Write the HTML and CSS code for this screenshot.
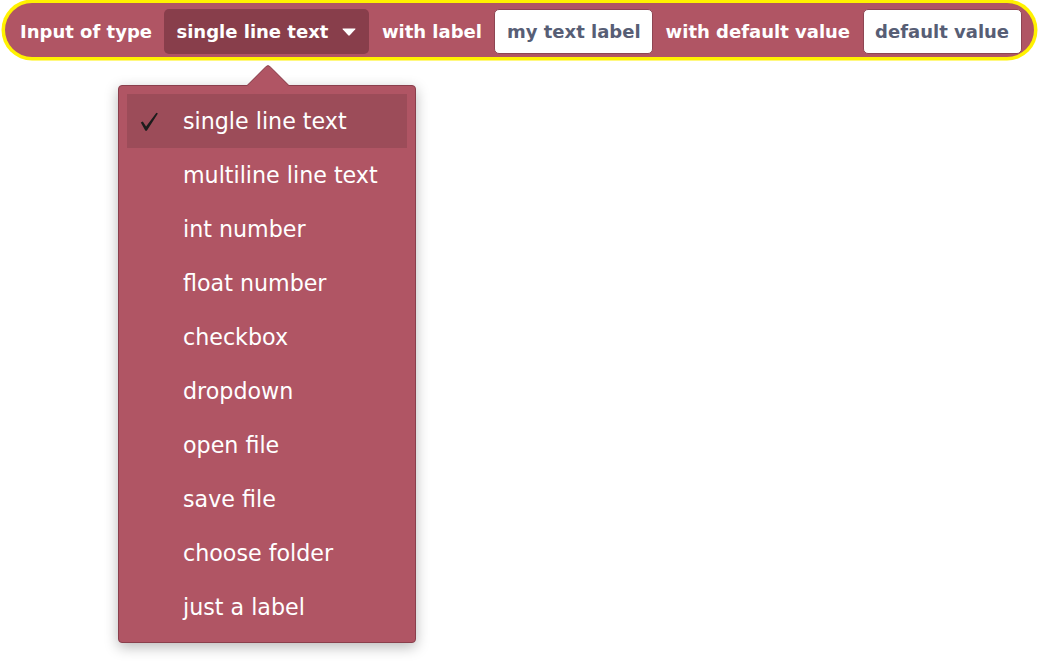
FILE: index.html
```html
<!DOCTYPE html>
<html lang="en">
<head>
<meta charset="utf-8">
<title>Input block</title>
<link rel="stylesheet" href="styles.css">
</head>
<body>
<div class="block">
  <span class="label">Input of type</span>
  <span class="field-dd">
    <span>single line text</span>
    <svg class="dd-arrow" width="14" height="8" viewBox="0 0 14 8"><path d="M1 0.5 H13 Q14 0.5 13.3 1.3 L7.8 7.3 Q7 8 6.2 7.3 L0.7 1.3 Q0 0.5 1 0.5 Z" fill="#fff"/></svg>
  </span>
  <span class="label">with label</span>
  <span class="field-text">my text label</span>
  <span class="label">with default value</span>
  <span class="field-text">default value</span>
</div>

<div class="menu">
  <div class="menu-arrow"></div>
  <div class="item selected">
    <span class="check">
      <svg width="20" height="20" viewBox="0 0 20 20"><path d="M0.8 10.6 L2.8 9.6 L6.1 14.6 L16.4 0.8 L17.9 1.6 L6.8 18.8 L5.4 18.8 Z" fill="#1c1c1c"/></svg>
    </span>
    <span>single line text</span>
  </div>
  <div class="item"><span class="check"></span><span>multiline line text</span></div>
  <div class="item"><span class="check"></span><span>int number</span></div>
  <div class="item"><span class="check"></span><span>float number</span></div>
  <div class="item"><span class="check"></span><span>checkbox</span></div>
  <div class="item"><span class="check"></span><span>dropdown</span></div>
  <div class="item"><span class="check"></span><span>open file</span></div>
  <div class="item"><span class="check"></span><span>save file</span></div>
  <div class="item"><span class="check"></span><span>choose folder</span></div>
  <div class="item"><span class="check"></span><span>just a label</span></div>
</div>
</body>
</html>
```

FILE: styles.css
```css
html, body {
  margin: 0;
  padding: 0;
  background: #ffffff;
}

body {
  font-family: "DejaVu Sans", sans-serif;
  width: 1040px;
  height: 662px;
  overflow: hidden;
}

.block {
  display: inline-flex;
  align-items: center;
  gap: 12.5px;
  box-sizing: border-box;
  height: 54px;
  margin: 3px 0 0 5px;
  padding: 3px 12px 0 15px;
  background: #b05564;
  border-radius: 27px;
  box-shadow: 0 0 0 3.5px #fff200;
  font-weight: bold;
  font-size: 18px;
  color: #ffffff;
  white-space: nowrap;
}

.label {
  line-height: 45px;
}

.field-dd {
  display: inline-flex;
  align-items: center;
  gap: 14px;
  height: 45px;
  box-sizing: border-box;
  padding: 0 13px 0 12px;
  background: #883e4b;
  border-radius: 5px;
}

.dd-arrow {
  display: block;
  margin-top: 1px;
}

.field-text {
  display: inline-flex;
  align-items: center;
  height: 45px;
  box-sizing: border-box;
  padding: 0 11.5px;
  background: #ffffff;
  border: 1px solid #8e4552;
  border-radius: 5px;
  color: #575e75;
}

.menu {
  position: relative;
  box-sizing: border-box;
  width: 298px;
  margin: 28px 0 0 118px;
  padding: 8px;
  background: #b05564;
  border: 1px solid #8a3f4c;
  border-radius: 4px;
  box-shadow: 0 4px 14px rgba(0, 0, 0, 0.28);
  font-size: 22.2px;
  color: #ffffff;
}

.menu-arrow {
  position: absolute;
  left: 134px;
  top: -16px;
  width: 30px;
  height: 30px;
  box-sizing: border-box;
  background: #b05564;
  border-top: 1px solid #8a3f4c;
  border-left: 1px solid #8a3f4c;
  border-top-left-radius: 4px;
  transform: rotate(45deg);
}

.item {
  position: relative;
  z-index: 1;
  display: flex;
  align-items: center;
  height: 54px;
  white-space: nowrap;
}

.item.selected {
  background: #9c4c59;
}

.check {
  display: flex;
  align-items: center;
  width: 56px;
  padding-left: 13px;
  box-sizing: border-box;
}

.check svg {
  display: block;
  margin-top: 1px;
}
```
